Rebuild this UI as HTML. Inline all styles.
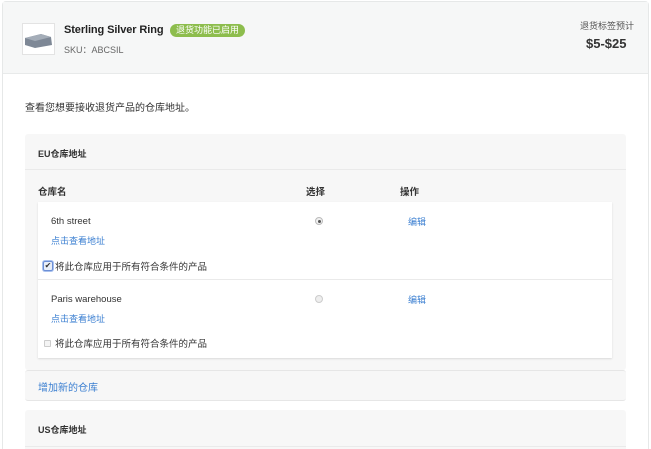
<!DOCTYPE html>
<html><head><meta charset="utf-8"><style>
*{margin:0;padding:0;box-sizing:border-box}
html,body{width:651px;height:449px;overflow:hidden}
body{background:#fff;font-family:"Liberation Sans","Noto Sans CJK SC",sans-serif;font-size:10px;color:#333;position:relative}
.a{position:absolute}
.card{left:2px;top:1px;width:647px;height:449px;border:1px solid #e6e8e8;border-bottom:none;border-radius:4px 4px 0 0;background:#fff}
.hdr{left:3px;top:2px;width:645px;height:72px;background:#f6f7f7;border-bottom:1px solid #e8eaea}
.sec{background:#f7f7f7;border-radius:3px}
.link{color:#3b7fd1}
</style></head><body>
<div class="a card"></div>
<div class="a hdr"></div>
<div class="a" style="left:22px;top:23px;width:33px;height:32px;background:#fff;border:1px solid #e3e3e3"></div>
<svg class="a" style="left:23px;top:30px" width="31" height="20"><path d="M2 8 L18 4 L28 7 L29 15 L12 18 L2 15Z" fill="#7e8896"/><path d="M2 8 L18 4 L28 7 L12 11Z" fill="#a4adb8"/></svg>
<div class="a" style="left:64px;top:24px;font-size:11px;font-weight:bold;color:#222;letter-spacing:-0.1px">Sterling Silver Ring</div>
<div class="a" style="left:170px;top:24px;height:13px;padding:0 6px;background:#8dbd4d;color:#fff;border-radius:7px;font-size:9px;line-height:13px">退货功能已启用</div>
<div class="a" style="left:64px;top:43px;font-size:9px;color:#666">SKU：ABCSIL</div>
<div class="a" style="left:580px;top:19px;font-size:9px;color:#555">退货标签预计</div>
<div class="a" style="left:586px;top:36px;font-size:13px;font-weight:bold;color:#333">$5-$25</div>
<div class="a" style="left:25px;top:99px;font-size:10px;color:#333">查看您想要接收退货产品的仓库地址。</div>

<div class="a sec" style="left:25px;top:134px;width:601px;height:236px"></div>
<div class="a" style="left:25px;top:169px;width:601px;height:1px;background:#eaeaea"></div>
<div class="a" style="left:38px;top:147px;font-size:9px;font-weight:bold">EU仓库地址</div>
<div class="a" style="left:38px;top:184px;font-size:9.5px;font-weight:bold">仓库名</div>
<div class="a" style="left:306px;top:184px;font-size:9.5px;font-weight:bold">选择</div>
<div class="a" style="left:400px;top:184px;font-size:9.5px;font-weight:bold">操作</div>
<div class="a" style="left:38px;top:202px;width:574px;height:156px;background:#fff;box-shadow:0 1px 2px rgba(0,0,0,.12)"></div>
<div class="a" style="left:38px;top:279px;width:574px;height:1px;background:#eaeaea"></div>

<div class="a" style="left:51px;top:216px;font-size:9.5px">6th street</div>
<div class="a" style="left:315px;top:217px;width:8px;height:8px;border-radius:50%;border:1px solid #bbb;background:#f0f0f0"></div>
<div class="a" style="left:318px;top:220px;width:3px;height:3px;border-radius:50%;background:#555"></div>
<div class="a link" style="left:408px;top:215px;font-size:9px">编辑</div>
<div class="a link" style="left:51px;top:234px;font-size:9px">点击查看地址</div>
<div class="a" style="left:43px;top:261px;width:10px;height:10px;border:1px solid #6c8fd6;border-radius:2px;background:#e8eef8;box-shadow:0 0 0 1px #a9c1ee;font-size:8px;line-height:8px;text-align:center">✔</div>
<div class="a" style="left:55px;top:259px;font-size:9.5px">将此仓库应用于所有符合条件的产品</div>

<div class="a" style="left:51px;top:294px;font-size:9.5px">Paris warehouse</div>
<div class="a" style="left:315px;top:295px;width:8px;height:8px;border-radius:50%;border:1px solid #ccc;background:#eee"></div>
<div class="a link" style="left:408px;top:293px;font-size:9px">编辑</div>
<div class="a link" style="left:51px;top:312px;font-size:9px">点击查看地址</div>
<div class="a" style="left:44px;top:340px;width:7px;height:7px;border:1px solid #ccc;border-radius:1px;background:#f4f4f4"></div>
<div class="a" style="left:55px;top:336px;font-size:9.5px">将此仓库应用于所有符合条件的产品</div>

<div class="a sec" style="left:25px;top:370px;width:601px;height:31px;border-top:1px solid #e6e6e6;border-bottom:1px solid #e6e6e6"></div>
<div class="a link" style="left:38px;top:379px;font-size:10px">增加新的仓库</div>

<div class="a sec" style="left:25px;top:410px;width:601px;height:45px"></div>
<div class="a" style="left:25px;top:446px;width:601px;height:1px;background:#eaeaea"></div>
<div class="a" style="left:38px;top:423px;font-size:9px;font-weight:bold">US仓库地址</div>
</body></html>
